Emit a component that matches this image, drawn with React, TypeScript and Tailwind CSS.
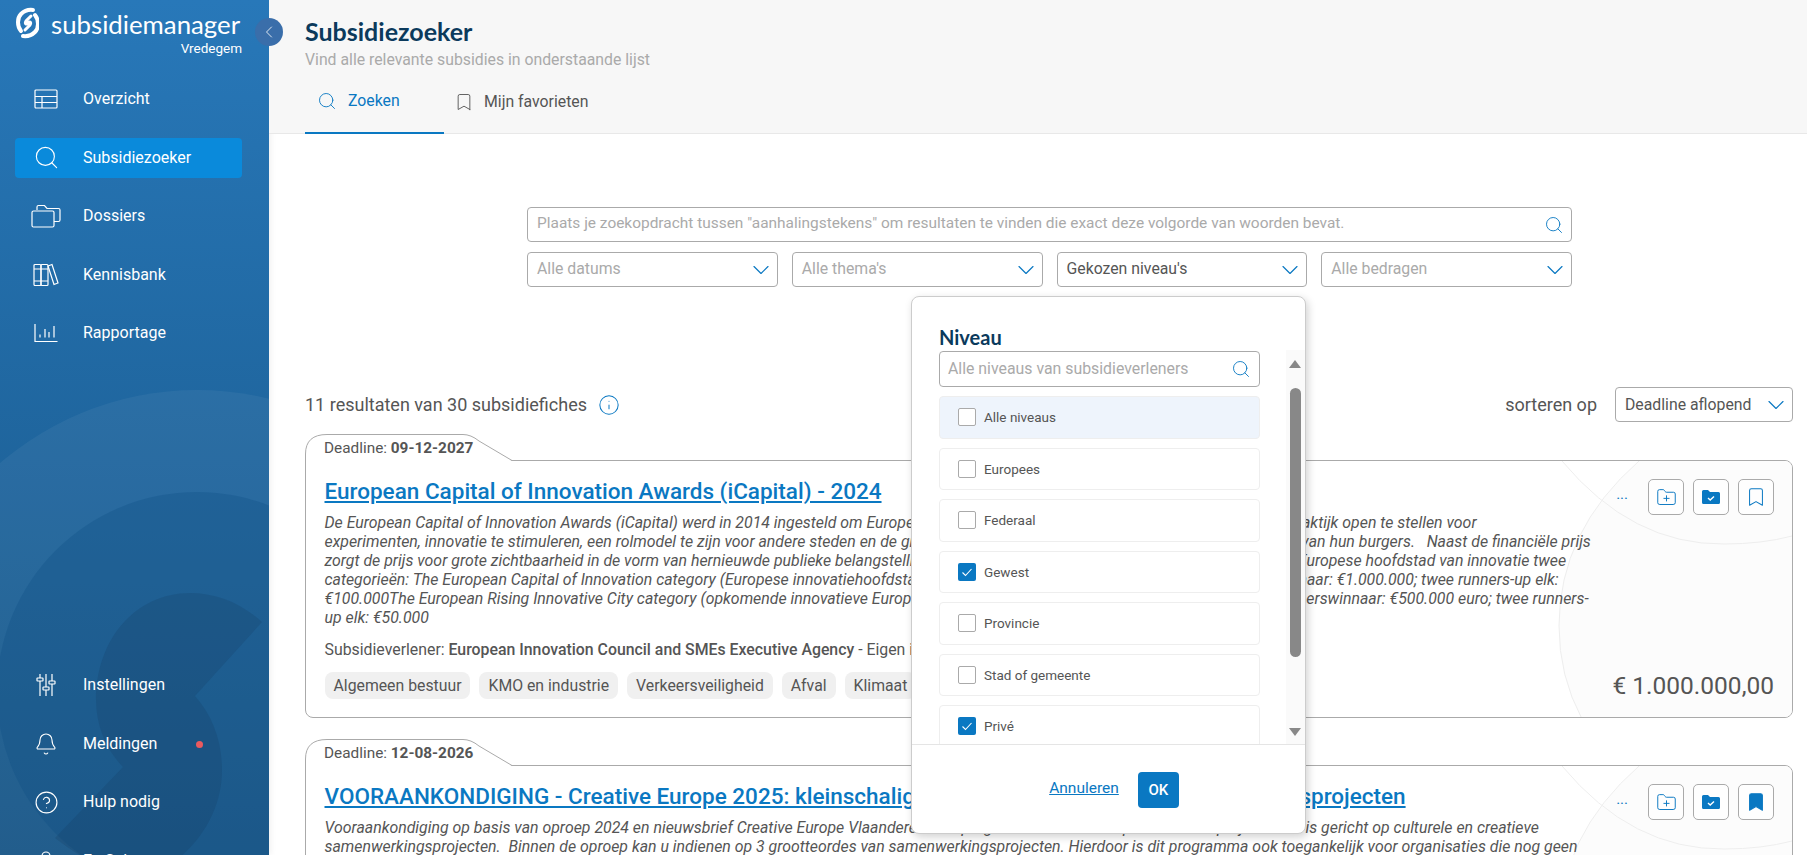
import { Bell, Bookmark, ChevronDown, ChevronLeft, CircleHelp, Info, FolderPlus, Search, User } from "lucide-react";

const Logo = () => (
    <svg viewBox="-1 0 24 32" className="w-[24px] h-[32px]" fill="none" stroke="white" strokeWidth="4" strokeLinecap="round">
        <path d="M5 24 C1 19 1 11 5 7 C8 4 13 2.5 17 3" />
        <path d="M19 8 C23 13 23 21 19 25 C16 28 11 29.5 7 29" />
        <path d="M15 9 L10 14 C8 17 11 18 12 16 C13 14 16 15 14 18 L9 23" strokeWidth="3" />
    </svg>
);

const TableIcon = () => (
    <svg viewBox="0 0 24 20" className="w-[24px] h-[20px]" fill="none" stroke="white" strokeWidth="1.2">
        <rect x="1" y="1" width="22" height="18" rx="1" />
        <path d="M1 7.5H23M1 13.5H23M8 7.5V19" />
    </svg>
);

const FoldersIcon = () => (
    <svg viewBox="0 0 30 24" className="w-[30px] h-[24px]" fill="none" stroke="white" strokeWidth="1.2">
        <path d="M6 6V3a1.5 1.5 0 0 1 1.5-1.5h6l2.5 3h11.5A1.5 1.5 0 0 1 29 6v10a1.5 1.5 0 0 1-1.5 1.5H23" />
        <path d="M1 8.5A1.5 1.5 0 0 1 2.5 7H21.500A1.500 1.500 0 0 1 23 8.500V21.500A1.500 1.500 0 0 1 21.500 23H2.500A1.500 1.500 0 0 1 1 21.500Z" />
    </svg>
);

const BooksIcon = () => (
    <svg viewBox="0 0 26 24" className="w-[26px] h-[24px]" fill="none" stroke="white" strokeWidth="1.2">
        <rect x="1" y="1.500" width="7" height="21" rx="1" />
        <rect x="8" y="1.500" width="7" height="21" rx="1" />
        <path d="M1 6H15M1 18H15" />
        <path d="M15 3l4-1.500 6 18.500-4 1.500z" />
    </svg>
);

const ChartIcon = () => (
    <svg viewBox="0 0 24 20" className="w-[24px] h-[20px]" fill="none" stroke="white" strokeWidth="1.2">
        <path d="M1 1V18.500H23.500" />
        <path d="M6 14.500V11.500M11 14.500V6M15 14.500V9M20 14.500V3" />
    </svg>
);

const SlidersIcon = () => (
    <svg viewBox="0 0 20 24" className="w-[20px] h-[24px]" fill="none" stroke="white" strokeWidth="1.200">
        <path d="M4 1V5M4 8V23M10 1V14M10 17V23M16 1V8M16 11V23" />
        <rect x="1" y="5" width="6" height="3" rx=".5" />
        <rect x="7" y="14" width="6" height="3" rx=".5" />
        <rect x="13" y="8" width="6" height="3" rx=".5" />
    </svg>
);

const FolderCheck = () => (
    <svg viewBox="0 0 18 14" className="w-[18px] h-[14px]">
        <path d="M0 1.500A1.500 1.500 0 0 1 1.500 0H6l2 2h8.500A1.500 1.500 0 0 1 18 3.500V12.500A1.500 1.500 0 0 1 16.500 14H1.500A1.500 1.500 0 0 1 0 12.500Z" fill="#0a78c2" />
        <path d="M6 8l2.200 2 3.800-3.600" fill="none" stroke="white" strokeWidth="1.400" />
    </svg>
);

const Check = () => (
    <svg viewBox="0 0 18 18" className="w-[18px] h-[18px]" fill="none" stroke="white" strokeWidth="1.100">
        <path d="M4.500 9.500L7.500 12.500L13.500 6" />
    </svg>
);

const NAV_TOP = [
    { name: "Overzicht", icon: <TableIcon /> },
    { name: "Subsidiezoeker", icon: <Search size={27} strokeWidth={1} />, active: true },
    { name: "Dossiers", icon: <FoldersIcon /> },
    { name: "Kennisbank", icon: <BooksIcon /> },
    { name: "Rapportage", icon: <ChartIcon /> },
];

const NAV_BOTTOM = [
    { name: "Instellingen", icon: <SlidersIcon /> },
    { name: "Meldingen", icon: <Bell size={24} strokeWidth={1.100} />, dot: true },
    { name: "Hulp nodig", icon: <CircleHelp size={25} strokeWidth={1.100} /> },
    { name: "Eo Sale", icon: <User size={24} strokeWidth={1.100} /> },
];

const NavItem = ({ name, icon, active, dot }: { name: string; icon: React.ReactNode; active?: boolean; dot?: boolean }) => (
    <div className={`relative flex items-center h-[40px] w-[227px] rounded-[4px] ${active ? "bg-[#0a8adb]" : ""}`}>
        <div className="w-[68px] shrink-0 text-white">
            <div className="w-[62px] flex justify-center">{icon}</div>
        </div>
        <span className="text-[16px] text-white">{name}</span>
        {dot && <span className="absolute left-[181px] top-[17px] w-[7px] h-[7px] rounded-full bg-[#ea5a5f]" />}
    </div>
);

const Sidebar = () => (
    <aside className="relative w-[269px] h-[855px] shrink-0 overflow-hidden bg-gradient-to-b from-[#2878b9] to-[#175586] shadow-[2px_0_6px_rgba(0,0,0,0.06)]">
        <svg className="absolute inset-0 w-[269px] h-[855px]" viewBox="0 0 269 855">
            <circle cx="197" cy="692" r="302" fill="#ffffff" fillOpacity="0.05" />
            <circle cx="197" cy="692" r="200" fill="#0b4a80" fillOpacity="0.28" />
            <path d="M262 622 C240 602 215 593 190 593 C135 593 96 640 96 700 C96 725 106 750 123 767 L55 838 C70 850 85 858 95 865 L170 865 C205 840 222 805 222 770 C222 740 212 715 195 696 Z" fill="#14385c" fillOpacity="0.2" />
        </svg>
        <div className="relative pl-[15px]">
            <div className="flex items-start gap-[12px] pt-[7px] h-[39px]">
                <Logo />
                <span className="font-[Lato,sans-serif] text-[25.800px] leading-[34px] text-white whitespace-nowrap">subsidiemanager</span>
            </div>
            <div className="w-[227px] text-right text-[13.500px] leading-[18px] text-white">Vredegem</div>
            <nav className="mt-[22px] flex flex-col gap-[18.500px]">
                {NAV_TOP.map((item) => (
                    <NavItem key={item.name} {...item} />
                ))}
            </nav>
            <nav className="mt-[312px] flex flex-col gap-[18.500px]">
                {NAV_BOTTOM.map((item) => (
                    <NavItem key={item.name} {...item} />
                ))}
            </nav>
        </div>
    </aside>
);

const Select = ({ label, filled }: { label: string; filled?: boolean }) => (
    <div className="flex-1 h-[35px] rounded-[4px] border border-[#aaa] bg-white flex items-center justify-between pl-[9px] pr-[2px]">
        <span className={`pb-[2px] text-[15.800px] ${filled ? "text-[#555]" : "text-[#aaa]"}`}>{label}</span>
        <ChevronDown size={28} strokeWidth={1} className="text-[#0a78c2]" />
    </div>
);

const ActionButton = ({ children }: { children: React.ReactNode }) => (
    <div className="w-[36px] h-[36px] rounded-[5px] border border-[#aaa] bg-white/60 flex items-center justify-center">{children}</div>
);

const CardDecoration = () => (
    <svg className="absolute right-0 top-0 w-[240px] h-[258px]" viewBox="0 0 240 258" fill="none">
        <path d="M87 0 Q7 70 7 165 Q7 215 30 258 L240 258 L240 0 Z" fill="#fcfcfc" />
        <path d="M87 0 Q7 70 7 165 Q7 215 30 258" stroke="#eee" />
        <path d="M10 0 Q80 84 172 83 Q210 83 240 75" stroke="#eee" />
    </svg>
);

const Card = ({
    deadline,
    title,
    lines,
    giver,
    tags,
    amount,
    saved,
    className,
}: {
    deadline: string;
    title: string;
    lines: string[];
    giver?: React.ReactNode;
    tags?: string[];
    amount?: string;
    saved?: boolean;
    className?: string;
}) => (
    <div className={`relative pt-[26px] ${className ?? ""}`}>
        <svg className="absolute left-0 top-0 w-[208px] h-[28px] z-10" viewBox="0 0 208 28" fill="none">
            <path d="M1 28V20Q1 .5 22 .5H158Q166 .5 174 7L207 27V28Z" fill="white" />
            <path d="M.5 28V20Q.5 .5 22 .5H158Q166 .5 174 7L207 26.500" stroke="#aaa" />
        </svg>
        <div className="absolute left-[19px] top-[1px] z-10 h-[26px] leading-[26px] text-[15.350px] text-[#555]">
            Deadline: <span className="font-bold">{deadline}</span>
        </div>
        <div className="relative h-[258px] rounded-[8px] rounded-tl-none border border-[#aaa] bg-white pl-[18.500px] pr-[18px] overflow-hidden">
            <CardDecoration />
            <div className="relative">
                <h2 className="pt-[15px] text-[22.500px] leading-[30px] font-medium text-[#0a78c2] underline whitespace-nowrap">{title}</h2>
                <div className="mt-[7px] text-[15.870px] leading-[19px] italic text-[#555] whitespace-pre">
                    {lines.map((line) => (
                        <div key={line}>{line}</div>
                    ))}
                </div>
                {giver && <div className="mt-[13px] text-[15.850px] leading-[19px] text-[#555] whitespace-nowrap">{giver}</div>}
                {tags && (
                    <div className="mt-[13px] flex gap-[9px]">
                        {tags.map((tag) => (
                            <span key={tag} className="h-[27px] px-[9px] rounded-[8px] bg-[#f0f0f0] text-[15.800px] leading-[27px] text-[#555]">
                                {tag}
                            </span>
                        ))}
                    </div>
                )}
            </div>
            <div className="absolute right-[18px] top-[18px] flex items-center gap-[9px]">
                <span className="mr-[11px] text-[15px] leading-[15px] text-[#0a78c2] -translate-y-[3px]">...</span>
                <ActionButton>
                    <FolderPlus size={21} strokeWidth={1.100} className="text-[#0a78c2]" />
                </ActionButton>
                <ActionButton>
                    <FolderCheck />
                </ActionButton>
                <ActionButton>
                    <Bookmark size={22} strokeWidth={1.100} className={saved ? "text-[#0a78c2] fill-[#0a78c2]" : "text-[#0a78c2]"} />
                </ActionButton>
            </div>
            {amount && <div className="absolute right-[18px] top-[210px] text-[24.500px] leading-[30px] text-[#555]">{amount}</div>}
        </div>
    </div>
);

const LEVELS = [
    { name: "Alle niveaus", hover: true },
    { name: "Europees" },
    { name: "Federaal" },
    { name: "Gewest", checked: true },
    { name: "Provincie" },
    { name: "Stad of gemeente" },
    { name: "Privé", checked: true },
];

const LevelPopup = () => (
    <div className="absolute left-[642px] top-[296px] z-20 w-[395px] h-[538px] rounded-[8px] border border-[#ccc] bg-white shadow-[2px_3px_8px_rgba(0,0,0,0.18)] flex flex-col overflow-hidden">
        <div className="relative h-[447px] pl-[27px] overflow-hidden">
            <h3 className="pt-[26px] font-[Lato,sans-serif] font-bold text-[20px] leading-[28px] text-[#0b3a5c]">Niveau</h3>
            <div className="w-[321px] h-[36px] rounded-[4px] border border-[#aaa] flex items-center justify-between pl-[8px] pr-[8px]">
                <span className="text-[15.850px] text-[#aaa]">Alle niveaus van subsidieverleners</span>
                <Search size={20} strokeWidth={1.100} className="text-[#0a78c2]" />
            </div>
            <div className="mt-[9px] w-[321px] flex flex-col gap-[9px]">
                {LEVELS.map((level) => (
                    <div
                        key={level.name}
                        className={`shrink-0 h-[42.500px] rounded-[4px] border border-[#eee] flex items-center gap-[8px] pl-[18px] ${level.hover ? "bg-[#eef4fc]" : "bg-white"}`}
                    >
                        {level.checked ? (
                            <span className="w-[18px] h-[18px] rounded-[2px] bg-[#0a78c2] flex items-center justify-center">
                                <Check />
                            </span>
                        ) : (
                            <span className="w-[18px] h-[18px] rounded-[2px] border border-[#aaa] bg-white" />
                        )}
                        <span className="text-[13.500px] text-[#555]">{level.name}</span>
                    </div>
                ))}
            </div>
            <div className="absolute right-0 top-[53px] bottom-0 w-[19px] bg-[#fafafa]">
                <div className="absolute left-[3px] top-[10px] w-0 h-0 border-x-[6px] border-x-transparent border-b-[8px] border-b-[#888]" />
                <div className="absolute left-[4px] top-[38px] w-[11px] h-[269px] rounded-full bg-[#888]" />
                <div className="absolute left-[3px] bottom-[8px] w-0 h-0 border-x-[6px] border-x-transparent border-t-[8px] border-t-[#888]" />
            </div>
        </div>
        <div className="flex-1 border-t border-[#e5e5e5] flex items-start justify-center gap-[19px] pt-[27px] pl-[11px]">
            <span className="text-[15.500px] leading-[32px] text-[#0a78c2] underline">Annuleren</span>
            <span className="w-[41px] h-[36px] rounded-[4px] bg-[#0a78c2] text-white text-[15px] font-medium flex items-center justify-center">OK</span>
        </div>
    </div>
);

const App = () => {
    return (
        <div className="relative flex w-[1807px] h-[855px] overflow-hidden bg-white font-[Roboto,sans-serif]">
            <Sidebar />
            <div className="absolute left-[255px] top-[18px] z-20 w-[28px] h-[28px] rounded-full bg-[#3a6eaa] flex items-center justify-center">
                <ChevronLeft size={20} strokeWidth={1} className="text-white" />
            </div>
            <main className="relative flex-1 min-w-0 overflow-hidden">
                <header className="h-[134px] bg-[#f7f7f7] border-b border-[#e8e8e8] pl-[36px]">
                    <h1 className="pt-[14px] font-[Lato,sans-serif] font-bold text-[25px] leading-[34px] text-[#0b3a5c]">Subsidiezoeker</h1>
                    <p className="mt-[1px] text-[15.800px] leading-[22px] text-[#aaa]">Vind alle relevante subsidies in onderstaande lijst</p>
                    <div className="mt-[6px] flex">
                        <div className="w-[139px] h-[57px] border-b-2 border-[#0a78c2] flex items-center gap-[11px] pl-[12px] pb-[8px] text-[#0a78c2]">
                            <Search size={20} strokeWidth={1.100} />
                            <span className="text-[15.800px]">Zoeken</span>
                        </div>
                        <div className="ml-[10px] h-[57px] flex items-center gap-[10px] pb-[8px] text-[#555]">
                            <Bookmark size={20} strokeWidth={1.100} />
                            <span className="text-[15.800px]">Mijn favorieten</span>
                        </div>
                    </div>
                </header>
                <section className="mt-[73px] ml-[258px] w-[1045px]">
                    <div className="h-[35px] rounded-[4px] border border-[#aaa] flex items-center justify-between pl-[9px] pr-[7px]">
                        <span className="pb-[2px] text-[15.450px] text-[#aaa]">
                            Plaats je zoekopdracht tussen "aanhalingstekens" om resultaten te vinden die exact deze volgorde van woorden bevat.
                        </span>
                        <Search size={20} strokeWidth={1.100} className="text-[#0a78c2]" />
                    </div>
                    <div className="mt-[10px] flex gap-[14px]">
                        <Select label="Alle datums" />
                        <Select label="Alle thema's" />
                        <Select label="Gekozen niveau's" filled />
                        <Select label="Alle bedragen" />
                    </div>
                </section>
                <section className="mt-[100px] pl-[36px] pr-[14px]">
                    <div className="flex items-center justify-between h-[35px]">
                        <div className="flex items-center gap-[11px] text-[18px] text-[#555]">
                            11 resultaten van 30 subsidiefiches
                            <Info size={22} strokeWidth={1.100} className="text-[#0a78c2]" />
                        </div>
                        <div className="flex items-center gap-[18px]">
                            <span className="text-[18px] text-[#555]">sorteren op</span>
                            <div className="w-[178px] h-[35px] rounded-[4px] border border-[#aaa] flex items-center justify-between pl-[9px] pr-[2px]">
                                <span className="text-[15.800px] text-[#555]">Deadline aflopend</span>
                                <ChevronDown size={28} strokeWidth={1} className="text-[#0a78c2]" />
                            </div>
                        </div>
                    </div>
                    <Card
                        className="mt-[12px]"
                        deadline="09-12-2027"
                        title="European Capital of Innovation Awards (iCapital) - 2024"
                        lines={[
                            "De European Capital of Innovation Awards (iCapital) werd in 2014 ingesteld om Europese steden te belonen die bereid zijn hun eigen bestuurspraktijk open te stellen voor",
                            "experimenten, innovatie te stimuleren, een rolmodel te zijn voor andere steden en de groei van de stad te bevorderen door nu ook het betrekken van hun burgers.   Naast de financiële prijs",
                            "zorgt de prijs voor grote zichtbaarheid in de vorm van hernieuwde publieke belangstelling en nieuwe kansen en partnerschap. Er is voor de titel Europese hoofdstad van innovatie twee",
                            "categorieën: The European Capital of Innovation category (Europese innovatiehoofdstad) met een totaal prijzengelden voor de eerste plaatswinnaar: €1.000.000; twee runners-up elk:",
                            "€100.000The European Rising Innovative City category (opkomende innovatieve Europese steden) met een totaal prijzengelden voor de deelnemerswinnaar: €500.000 euro; twee runners-",
                            "up elk: €50.000",
                        ]}
                        giver={
                            <>
                                Subsidieverlener: <span className="font-medium">European Innovation Council and SMEs Executive Agency</span> - Eigen initiatief
                            </>
                        }
                        tags={["Algemeen bestuur", "KMO en industrie", "Verkeersveiligheid", "Afval", "Klimaat"]}
                        amount="€ 1.000.000,00"
                    />
                    <Card
                        className="mt-[21px]"
                        deadline="12-08-2026"
                        title="VOORAANKONDIGING - Creative Europe 2025: kleinschalige, middelgrote Euregio: samenwerkingsprojecten"
                        lines={[
                            "Vooraankondiging op basis van oproep 2024 en nieuwsbrief Creative Europe Vlaanderen. Het programma steunt Europese kleinere projecten en is gericht op culturele en creatieve",
                            "samenwerkingsprojecten.  Binnen de oproep kan u indienen op 3 grootteordes van samenwerkingsprojecten. Hierdoor is dit programma ook toegankelijk voor organisaties die nog geen",
                        ]}
                        saved
                    />
                </section>
                <LevelPopup />
            </main>
        </div>
    );
};

export default App;
